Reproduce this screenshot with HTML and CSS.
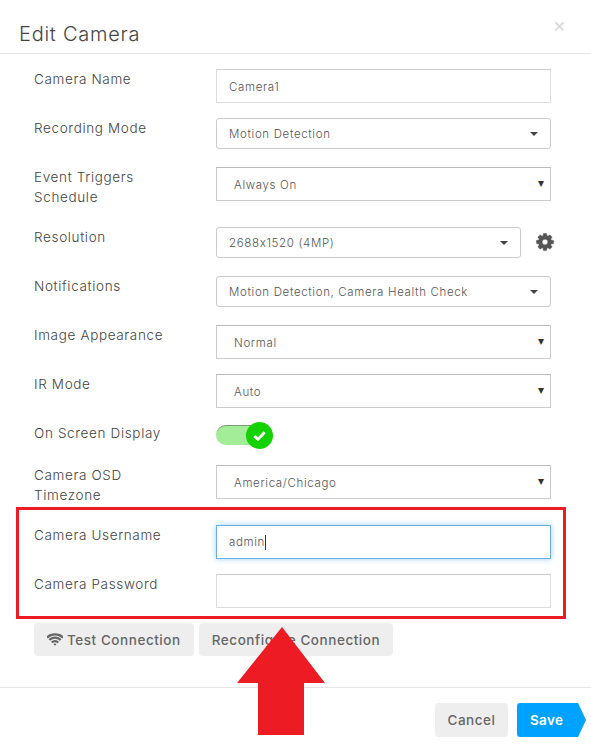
FILE: index.html
```html
<!DOCTYPE html>
<html lang="en">

<head>
    <meta charset="UTF-8">
    <meta name="viewport" content="width=device-width, initial-scale=1.0">
    <title>Edit Camera</title>

    <link rel="stylesheet" href="styles.css">
</head>

<body>
    <div id="modal">
        <div class="cabecalho">
            <h1>Edit Camera</h1>
            <span class="fechar">×</span>
        </div>

        <div class="corpo">
            <div class="linha">
                <label>Camera Name</label>
                <div class="campo">Camera1</div>
            </div>

            <div class="linha">
                <label>Recording Mode</label>
                <div class="menu">Motion Detection <i class="seta"></i></div>
            </div>

            <div class="linha alta">
                <label>Event Triggers Schedule</label>
                <div class="nativo">Always On <i class="seta-nativa">▾</i></div>
            </div>

            <div class="linha">
                <label>Resolution</label>
                <div class="com-icone">
                    <div class="menu">2688x1520 (4MP) <i class="seta"></i></div>
                    <svg class="engrenagem" viewBox="0 0 1792 1792">
                        <path d="M1152 896q0-106-75-181t-181-75-181 75-75 181 75 181 181 75 181-75 75-181zm512-109v222q0 12-8 23t-20 13l-185 28q-19 54-39 91 35 50 107 138 10 12 10 25t-9 23q-27 37-99 108t-94 71q-12 0-26-9l-138-108q-44 23-91 38-16 136-29 186-7 28-36 28h-222q-14 0-24.500-8.500t-11.500-21.500l-28-184q-49-16-90-37l-141 107q-10 9-25 9-14 0-25-11-126-114-165-168-7-10-7-23 0-12 8-23 15-21 51-66.500t54-70.500q-27-50-41-99l-183-27q-13-2-21-12.500t-8-23.500v-222q0-12 8-23t19-13l186-28q14-46 39-92-40-57-107-138-10-12-10-24 0-10 9-23 26-36 98.500-107.500t94.500-71.500q13 0 26 10l138 107q44-23 91-38 16-136 29-186 7-28 36-28h222q14 0 24.500 8.500t11.500 21.500l28 184q49 16 90 37l142-107q9-9 24-9 13 0 25 10 129 119 165 170 7 8 7 22 0 12-8 23-15 21-51 66.500t-54 70.500q26 50 41 98l183 28q13 2 21 12.500t8 23.500z"/>
                    </svg>
                </div>
            </div>

            <div class="linha">
                <label>Notifications</label>
                <div class="menu">Motion Detection, Camera Health Check <i class="seta"></i></div>
            </div>

            <div class="linha">
                <label>Image Appearance</label>
                <div class="nativo">Normal <i class="seta-nativa">▾</i></div>
            </div>

            <div class="linha">
                <label>IR Mode</label>
                <div class="nativo">Auto <i class="seta-nativa">▾</i></div>
            </div>

            <div class="linha baixa">
                <label>On Screen Display</label>
                <div class="toggle">
                    <div class="trilho"></div>
                    <div class="bolinha">
                        <svg viewBox="0 0 16 16">
                            <path d="M2.500 8.500l3.800 3.600 7.200-7.600" fill="none" stroke="#fff" stroke-width="3"/>
                        </svg>
                    </div>
                </div>
            </div>

            <div class="linha alta">
                <label>Camera OSD Timezone</label>
                <div class="nativo">America/Chicago <i class="seta-nativa">▾</i></div>
            </div>

            <div class="linha">
                <label>Camera Username</label>
                <div class="campo foco"><span class="cursor">admin</span></div>
            </div>

            <div class="linha">
                <label>Camera Password</label>
                <div class="campo"></div>
            </div>

            <div class="botoes">
                <button class="botao">
                    <svg class="wifi" viewBox="0 0 1792 1792">
                        <path d="M896 1523q-20 0-93-73.500t-73-93.500q0-32 62.500-54t103.500-22 103.500 22 62.500 54q0 20-73 93.500t-93 73.500zm270-271q-2 0-40-25t-101.500-50-128.500-25-128.500 25-101 50-40.500 25q-18 0-93.500-75t-75.500-93q0-13 10-23 78-77 196-121t233-44 233 44 196 121q10 10 10 23 0 18-75.500 93t-93.500 75zm273-272q-11 0-23-8-136-105-252-154.500t-268-49.500q-85 0-170.500 22t-149 53-113.500 62-79 53-31 22q-17 0-92-75t-75-93q0-12 10-22 132-132 320-205t380-73 380 73 320 205q10 10 10 22 0 18-75 93t-92 75zm271-271q-11 0-22-9-179-157-371.500-236.500t-420.500-79.500-420.500 79.500-371.500 236.500q-11 9-22 9-17 0-92.500-75t-75.500-93q0-13 10-23 187-186 445-288t527-102 527 102 445 288q10 10 10 23 0 18-75.500 93t-92.500 75z"/>
                    </svg>
                    Test Connection
                </button>
                <button class="botao">Reconfigure Connection</button>
            </div>
        </div>

        <div class="rodape">
            <button class="botao">Cancel</button>
            <div class="salvar">
                <span>Save</span>
                <svg viewBox="0 0 69 34">
                    <path d="M3 0H61L69 17L61 34H3Q0 34 0 31V3Q0 0 3 0Z" fill="#00a2ff"/>
                </svg>
            </div>
        </div>
    </div>

    <!-- marcacoes em vermelho por cima do print -->
    <div class="destaque"></div>
    <svg class="flecha" viewBox="0 0 88 108">
        <polygon points="45,0 88,56 67,56 67,108 21,108 21,56 0,56" fill="#ed1c24"/>
    </svg>
</body>

</html>
```

FILE: styles.css
```css
* {
    padding: 0;
    margin: 0;
    box-sizing: border-box;
}

body {
    width: 591px;
    height: 752px;
    overflow: hidden;
    background-color: white;
    color: #666;
    font-family: 'Inter', 'Liberation Sans', sans-serif;
    position: relative;
}

.cabecalho {
    height: 54px;
    padding: 22px 0 0 19px;
    border-bottom: 1px solid #e5e5e5;
    display: flex;
    justify-content: space-between;
}

.cabecalho h1 {
    font-size: 20px;
    font-weight: 300;
    line-height: 24px;
    letter-spacing: 0.75px;
    color: #444;
}

.fechar {
    margin: -9px 25px 0 0;
    font-size: 20px;
    line-height: 24px;
    color: #d8d8d8;
}

.corpo {
    padding: 15px 40px 0 34px;
}

.linha {
    display: flex;
    margin-bottom: 15px;
    min-height: 34px;
}

.linha.alta {
    min-height: 40px;
    margin-bottom: 20px;
}

.linha.baixa {
    min-height: 27px;
}

.linha label {
    width: 182px;
    flex-shrink: 0;
    padding-right: 50px;
    font-size: 13.5px;
    font-weight: 300;
    line-height: 20px;
    letter-spacing: 0.65px;
    color: #444;
}

.campo,
.nativo,
.menu {
    flex: 1;
    background-color: white;
    font-size: 11.500px;
    font-weight: 300;
    letter-spacing: 0.65px;
    display: flex;
    align-items: center;
    justify-content: space-between;
    color: #555;
}

.campo {
    height: 34px;
    padding: 1px 12px 0;
    border: 1px solid #ddd;
    border-top-color: #ccc;
}

.campo.foco {
    border-color: #66afe9;
    box-shadow: 0 0 6px rgba(102, 175, 233, 0.6);
}

.cursor {
    border-right: 1px solid #333;
    line-height: 15px;
}

.menu {
    height: 31px;
    padding: 0 12px;
    border: 1px solid #ccc;
    border-radius: 3px;
}

.seta {
    border-top: 4px solid #444;
    border-left: 4px solid transparent;
    border-right: 4px solid transparent;
}

.nativo {
    height: 34px;
    padding: 1px 5px 0 17px;
    border: 1px solid #ccc;
    border-top-color: #bbb;
}

.seta-nativa {
    font-style: normal;
    font-size: 12px;
    color: #333;
    margin-top: -5px;
}

.com-icone {
    flex: 1;
    display: flex;
    align-items: flex-start;
    margin-right: -4px;
}

.engrenagem {
    width: 20px;
    height: 20px;
    margin: 5px 0 0 14px;
    fill: #555;
    stroke: #555;
    stroke-width: 40px;
}

.toggle {
    position: relative;
    width: 58px;
    height: 27px;
}

.trilho {
    width: 47px;
    height: 20px;
    margin-top: 2px;
    background-color: #a3ec98;
    border-top: 1px solid #7a9a76;
    border-radius: 10px;
}

.bolinha {
    position: absolute;
    top: -1px;
    left: 30px;
    width: 27px;
    height: 27px;
    border-radius: 50%;
    background-color: #14d100;
    display: flex;
    align-items: center;
    justify-content: center;
}

.bolinha svg {
    width: 15px;
    height: 15px;
}

.botoes {
    display: flex;
    gap: 5px;
    margin-top: 1px;
}

.botao {
    height: 33px;
    padding: 0 13px;
    border: none;
    border-radius: 4px;
    background-color: #eee;
    color: #666;
    font-family: inherit;
    font-size: 13.5px;
    font-weight: 500;
    letter-spacing: 0.55px;
    display: flex;
    align-items: center;
}

.wifi {
    width: 16px;
    height: 16px;
    margin-right: 4px;
    fill: #666;
}

.rodape {
    margin-top: 31px;
    border-top: 1px solid #e5e5e5;
    padding: 15px 5px 0 0;
    display: flex;
    justify-content: flex-end;
    gap: 9px;
}

.rodape .botao {
    width: 73px;
    height: 34px;
    justify-content: center;
}

.salvar {
    position: relative;
    width: 69px;
    height: 34px;
    color: white;
    font-size: 13.5px;
    font-weight: 600;
    letter-spacing: 0.3px;
    display: flex;
    align-items: center;
    padding-left: 13px;
}

.salvar svg {
    position: absolute;
    top: 0;
    left: 0;
    width: 69px;
    height: 34px;
    z-index: 0;
}

.salvar span {
    position: relative;
    z-index: 1;
}

.destaque {
    position: absolute;
    left: 16px;
    top: 507px;
    width: 550px;
    height: 112px;
    border: 3px solid #ed1c24;
}

.flecha {
    position: absolute;
    left: 237px;
    top: 627px;
    width: 88px;
    height: 108px;
}
```
